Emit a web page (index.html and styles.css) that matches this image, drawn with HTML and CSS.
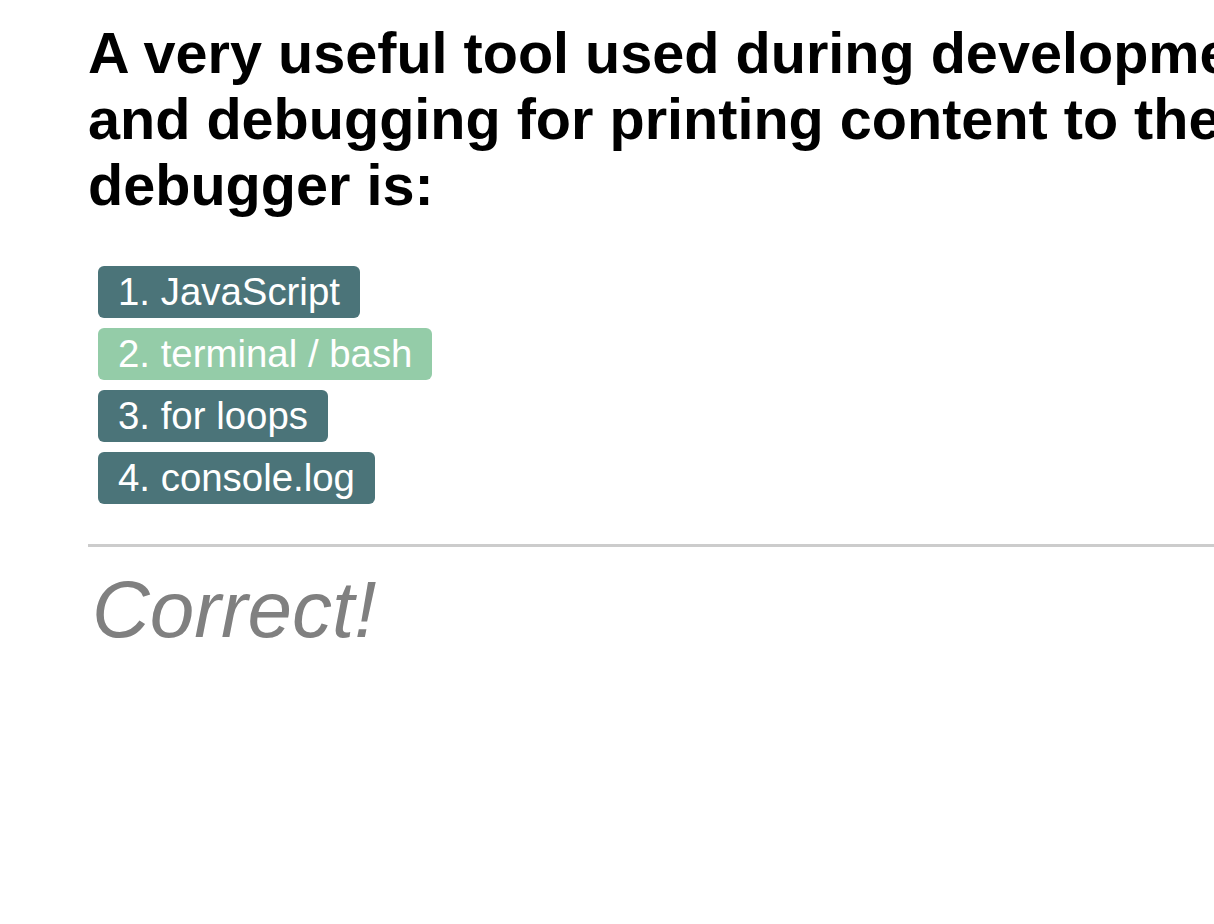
FILE: index.html
```html
<!DOCTYPE html>
<html lang="en">
<head>
<meta charset="utf-8">
<title>Quiz</title>
<link rel="stylesheet" href="styles.css">
</head>
<body>
<main class="quiz">
  <h1 class="question">A very useful tool used during development and debugging for printing content to the debugger is:</h1>
  <ol class="answers">
    <li class="answer">1. JavaScript</li>
    <li class="answer answer-picked">2. terminal / bash</li>
    <li class="answer">3. for loops</li>
    <li class="answer">4. console.log</li>
  </ol>
  <hr class="divider">
  <p class="result">Correct!</p>
</main>
</body>
</html>
```
FILE: styles.css
```css
html, body {
  margin: 0;
  padding: 0;
  overflow: hidden;
  background: #ffffff;
}

body {
  font-family: "Liberation Sans", Arial, sans-serif;
  color: #000000;
}

.quiz {
  width: 1250px;
  padding: 20px 0 0 88px;
}

.question {
  margin: 0;
  font-size: 57.6px;
  font-weight: 700;
  line-height: normal;
}

.answers {
  list-style: none;
  margin: 48px 0 0 10px;
  padding: 0;
  display: flex;
  flex-direction: column;
  align-items: flex-start;
  gap: 10px;
}

.answer {
  background: #4b7479;
  color: #ffffff;
  font-size: 38.4px;
  line-height: normal;
  padding: 4px 20px;
  border-radius: 6px;
}

.answer-picked {
  background: #94cca8;
}

.divider {
  margin: 40px 0 0 0;
  border: 0;
  height: 3px;
  background: #cccccc;
}

.result {
  margin: 17px 0 0 0;
  padding-left: 4px;
  font-size: 80px;
  font-style: italic;
  color: #808080;
  line-height: normal;
}
```
